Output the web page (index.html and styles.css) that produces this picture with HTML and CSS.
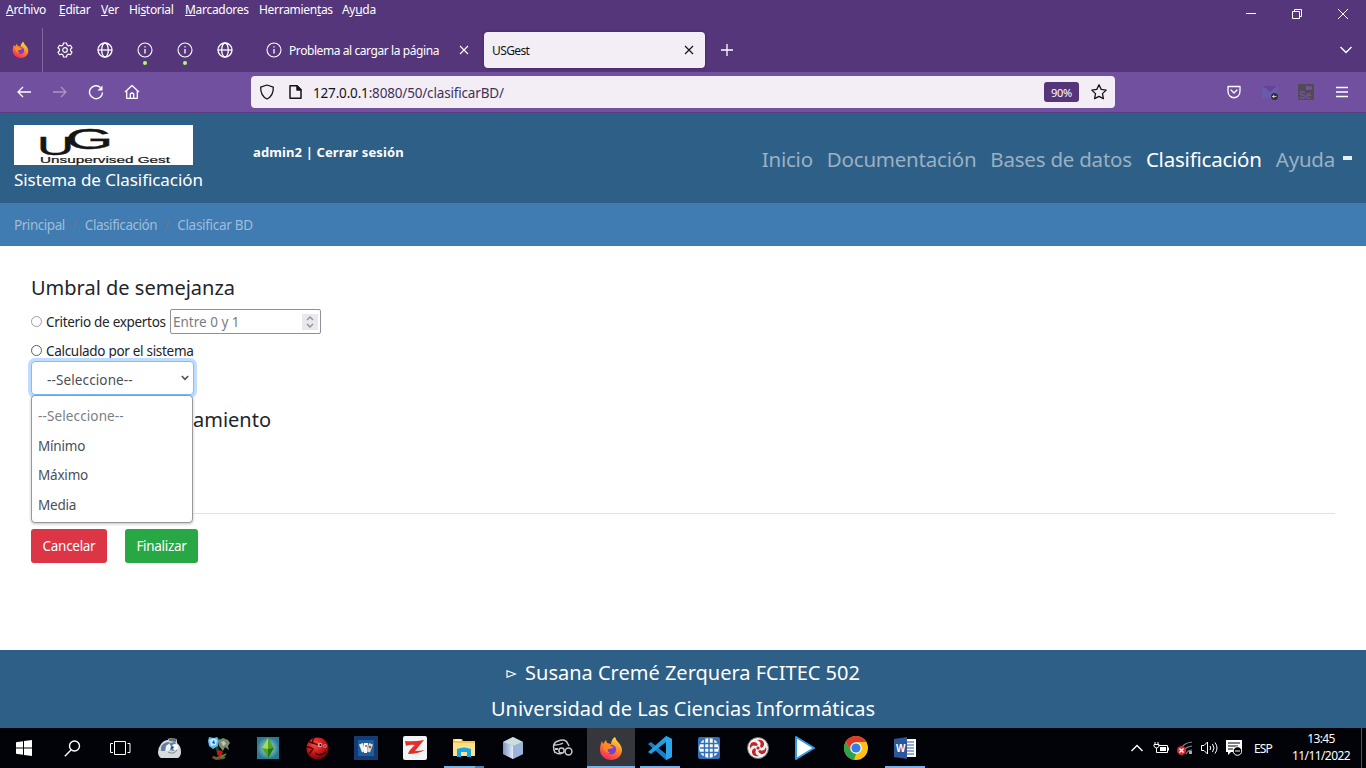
FILE: index.html
```html
<!DOCTYPE html>
<html lang="es">
<head>
<meta charset="utf-8">
<title>USGest</title>
<link rel="stylesheet" href="styles.css">
</head>
<body>
<svg class="defs" width="0" height="0" aria-hidden="true">
  <defs>
    <linearGradient id="flame" x1="0.8" y1="0" x2="0.3" y2="1"><stop offset="0" stop-color="#ffe83c"/><stop offset=".45" stop-color="#ff8c25"/><stop offset="1" stop-color="#f6235f"/></linearGradient>
    <linearGradient id="cube" x1="0" x2="1"><stop offset="0" stop-color="#7c95c2"/><stop offset="1" stop-color="#e3ebf7"/></linearGradient>
    <radialGradient id="bug" cx=".4" cy=".3" r=".75"><stop offset="0" stop-color="#ff4b3d"/><stop offset=".6" stop-color="#c1121a"/><stop offset="1" stop-color="#5d070b"/></radialGradient>
    <radialGradient id="teal"><stop offset="0" stop-color="#b8e6e4"/><stop offset="1" stop-color="#287b91"/></radialGradient>
    <symbol id="firefox" viewBox="0 0 24 24">
      <path d="M16 1c1 2 1 3 3 5 3 3 4 6 4 8 0 6-5 10-11 10S1 19.500 1 13.500C1 10 2 7 3 5l1 3 3-4 1 3 4 1c0-3 2-6 4-7z" fill="url(#flame)"/>
      <circle cx="12.300" cy="13.500" r="4.800" fill="#7440d8"/>
      <path d="M4 9c4-3 7-1 8 1 1 1 3 0 3 1-2 1-3 2-5 2-3 0-1 4 2 4-4 1-8-3-8-8z" fill="#ff8a23"/>
    </symbol>
    <symbol id="globe" viewBox="0 0 16 16"><g fill="none" stroke="currentColor" stroke-width="1.300"><circle cx="8" cy="8" r="7"/><ellipse cx="8" cy="8" rx="3.300" ry="7"/><path d="M1 8h14"/></g></symbol>
    <symbol id="info" viewBox="0 0 16 16"><circle cx="8" cy="8" r="7" fill="none" stroke="currentColor" stroke-width="1.100"/><path d="M8 7v4.500M8 4.300v1.300" stroke="currentColor" stroke-width="1.300"/></symbol>
    <symbol id="cross" viewBox="0 0 10 10"><path d="M1 1l8 8M9 1L1 9" stroke="currentColor" stroke-width="1.200"/></symbol>
  </defs>
</svg>

<div class="menubar">
  <span class="m1"><u>A</u>rchivo</span><span class="m2"><u>E</u>ditar</span><span class="m3"><u>V</u>er</span><span class="m4">Hi<u>s</u>torial</span><span class="m5"><u>M</u>arcadores</span><span class="m6">Herramien<u>t</u>as</span><span class="m7">Ay<u>u</u>da</span>
  <div class="winctl">
    <svg width="10" height="10"><path d="M0 4.500h10" stroke="#fff"/></svg>
    <svg width="10" height="10"><path d="M.5 2.500h7v7h-7zM2.500 2.500v-2h7v7h-2" fill="none" stroke="#fff"/></svg>
    <svg width="10" height="10"><path d="M0 0l10 10M10 0L0 10" stroke="#fff"/></svg>
  </div>
</div>

<div class="tabbar">
  <div class="fxview"><svg width="17" height="17"><use href="#firefox"/></svg></div>
  <div class="pin"><svg width="16" height="16" viewBox="0 0 16 16" fill="none" stroke="currentColor" stroke-width="1.200" stroke-linejoin="round"><path d="M6.500 1h3l.5 2 1.500.9 2-.6 1.500 2.500L13.500 7.200v1.600l1.500 1.400-1.500 2.500-2-.6-1.500.9-.5 2h-3L6 13l-1.500-.9-2 .6L1 10.200l1.500-1.400V7.200L1 5.800l1.500-2.500 2 .6L6 3z"/><circle cx="8" cy="8" r="2.300"/></svg></div>
  <div class="pin"><svg width="16" height="16"><use href="#globe"/></svg></div>
  <div class="pin"><svg width="16" height="16"><use href="#info"/></svg><i class="dot"></i></div>
  <div class="pin"><svg width="16" height="16"><use href="#info"/></svg><i class="dot"></i></div>
  <div class="pin"><svg width="16" height="16"><use href="#globe"/></svg></div>
  <div class="tab"><svg width="16" height="16"><use href="#info"/></svg><span class="tabname">Problema al cargar la página</span><svg class="x" width="10" height="10"><use href="#cross"/></svg></div>
  <div class="tab active"><span class="tabname">USGest</span><svg class="x" width="10" height="10"><use href="#cross"/></svg></div>
  <svg class="plus" width="12" height="12"><path d="M6 0v12M0 6h12" stroke="#fff" stroke-width="1.300"/></svg>
  <svg class="alltabs" width="12" height="8"><path d="M.5 1L6 6.500 11.500 1" fill="none" stroke="#fff" stroke-width="1.400"/></svg>
</div>

<div class="toolbar">
  <div class="navbtns">
    <svg width="16" height="16" fill="none" stroke="#fff" stroke-width="1.300"><path d="M15 8H2M7 3L2 8l5 5"/></svg>
    <svg class="dim" width="16" height="16" fill="none" stroke="#fff" stroke-width="1.300"><path d="M1 8h13M9 3l5 5-5 5"/></svg>
    <svg width="16" height="16" fill="none" stroke="#fff" stroke-width="1.400"><path d="M14.500 8.500A6.500 6.500 0 1 1 12.500 3.500"/><path d="M14.500 1.500v5h-5z" fill="#fff" stroke="none"/></svg>
    <svg width="16" height="16" fill="none" stroke="#fff" stroke-width="1.300" stroke-linejoin="round"><path d="M1 8L8 1.500 15 8M2.700 7v7.300h10.600V7M6.300 14V10q1.700-2 3.400 0v4"/></svg>
  </div>
  <div class="urlbar">
    <svg width="16" height="16" fill="none" stroke="#15141a" stroke-width="1.300" stroke-linejoin="round"><path d="M8 1l6.300 2.200C14.500 9 12 13 8 15 4 13 1.500 9 1.700 3.200z"/></svg>
    <svg width="13" height="14" fill="none" stroke="#15141a" stroke-width="1.500" stroke-linejoin="round"><path d="M1 .8h7l4 4v8.400H1z"/><path d="M8 1v4h4z" fill="#15141a"/></svg>
    <span class="url"><b>127.0.0.1</b>:8080/50/clasificarBD/</span>
    <span class="zoomlvl">90%</span>
    <svg width="16" height="16" fill="none" stroke="#15141a" stroke-width="1.300" stroke-linejoin="round"><path d="M8 .8l2.200 4.600 5 .7-3.700 3.500.9 5L8 12.300l-4.400 2.300.9-5L.8 6.100l5-.7z"/></svg>
  </div>
  <div class="exts">
    <svg width="14" height="14" fill="none" stroke="#fff" stroke-width="1.300" stroke-linejoin="round" stroke-linecap="round"><path d="M1 1.500h12V6c0 9-12 9-12 0zM4 5l3 3 3-3"/></svg>
    <svg width="16" height="16"><path d="M0 2h16v12H0z" fill="#695aae"/><path d="M1 2l7 6 7-6z" fill="#674397"/><circle cx="12.500" cy="12.500" r="3.500" fill="#30303b"/><path d="M10.500 12.500h4M10.500 12.500l1.500-1v2z" stroke="#ddd" fill="#ddd" stroke-width=".8"/></svg>
    <svg width="16" height="16"><rect width="16" height="16" rx="1" fill="#504c51"/><path d="M8 2h4v1l2-1v4l-2-1v1H8z" fill="#7550a2"/><text x="1" y="14.500" class="se">Se</text></svg>
    <svg width="12" height="12"><path d="M0 1.500h12M0 6h12M0 10.500h12" stroke="#fff" stroke-width="1.300"/></svg>
  </div>
</div>

<div class="page">
  <header class="head">
    <div class="brand">
      <svg class="logo" width="179" height="40">
        <rect width="179" height="40" fill="#fff"/>
        <text class="mono" transform="translate(23 29.500) scale(2.050 1)"><tspan class="mu">U</tspan><tspan class="mg" dx="-4.200" dy="-5.500">G</tspan></text>
        <text class="ug" x="26" y="38" textLength="130" lengthAdjust="spacingAndGlyphs">Unsupervised Gest</text>
      </svg>
      <div class="sys">Sistema de Clasificación</div>
    </div>
    <div class="user">admin2 | Cerrar sesión</div>
    <nav class="nav"><a>Inicio</a><a>Documentación</a><a>Bases de datos</a><a class="on">Clasificación</a><a>Ayuda</a><i class="caret"></i></nav>
  </header>
  <div class="crumbs"><span>Principal</span><i>/</i><span>Clasificación</span><i>/</i><span>Clasificar BD</span></div>
  <main class="main">
    <h4 class="h">Umbral de semejanza</h4>
    <div class="row r1"><i class="radio soft"></i><span class="t1">Criterio de expertos</span>
      <div class="num"><span>Entre 0 y 1</span><svg width="16" height="16"><rect width="16" height="16" fill="#e9e9ed"/><path d="M5 6l3-3 3 3M5 10l3 3 3-3" fill="none" stroke="#8f8f9d" stroke-width="1.400"/></svg></div></div>
    <div class="row r2"><i class="radio"></i><span class="t2">Calculado por el sistema</span></div>
    <div class="select"><span>--Seleccione--</span><svg width="8" height="6"><path d="M.8 1L4 4.300 7.200 1" fill="none" stroke="#495057" stroke-width="1.600"/></svg>
      <div class="options"><span class="off">--Seleccione--</span><span>Mínimo</span><span>Máximo</span><span>Media</span></div>
    </div>
    <h4 class="h h2">amiento</h4>
    <hr class="line">
    <div class="btns"><span class="btn red">Cancelar</span><span class="btn green">Finalizar</span></div>
  </main>
  <footer class="foot">
    <div class="f1"><svg width="11" height="8"><path d="M1 .8L9.500 4 1 7.200z" fill="none" stroke="#fff" stroke-width="1.200"/></svg><span>Susana Cremé Zerquera FCITEC 502</span></div>
    <div class="f2">Universidad de Las Ciencias Informáticas</div>
  </footer>
</div>

<div class="taskbar">
  <div class="sysbtns">
    <div><svg width="16" height="16"><path d="M0 2.200L7 1.200V7.500H0zM8 1l8-1v7.500H8zM0 8.500h7v6.300l-7-1zM8 8.500h8V16l-8-1z" fill="#fff"/></svg></div>
    <div><svg width="17" height="17" fill="none" stroke="#fff" stroke-width="1.400"><circle cx="10.500" cy="6" r="5"/><path d="M7 10L.8 16.200"/></svg></div>
    <div><svg width="21" height="14" fill="none" stroke="#fff"><path d="M4.500.5h11v13h-11zM3 2.500H.5v9H3M17.500 2.500H20v9h-2.500"/></svg></div>
  </div>
  <div class="apps">
    <div><svg width="24" height="22" viewBox="0 0 24 22"><path d="M3 7q3-4 7-4l1-2 8 1v4q4 3 4 9 0 4-3 6H3q-3-2-3-6 0-4 3-8z" fill="#d5dadd"/><path d="M3 14q-1-6 4-8 4-2 5 0l-4 3-1 5zM12 6l5-1 2 4-3 5-5-1z" fill="#5f7fa8"/><path d="M11 1l8 1-1 3-7-1z" fill="#6c7073"/><path d="M8 9l3-2 2 2-1 4-4 1z" fill="#eef5fb"/><circle cx="17" cy="10" r="3" fill="#f7fafc"/><circle cx="14.500" cy="10.500" r="1.200" fill="#213c61"/><path d="M10 15q6 3 9-2" fill="none" stroke="#7c8990"/></svg></div>
    <div><svg width="22" height="24" viewBox="0 0 22 24"><path d="M9 11q0 6 5 9M8 2l5 4" stroke="#174c22" stroke-width="3" fill="none"/><path d="M1 1l5 1 3-1 2 4-1 5-5 3-4-3-1-5z" fill="#5bb9ef"/><path d="M1 4l5-2 3 2-1 5-5 1z" fill="#b9e9ff"/><path d="M6 4l1 4-3-1z" fill="#1746ad"/><path d="M11 4l4-2 5 2 2 3-2 3 1 4-4-3-2 4-4-5z" fill="#7c8b72"/><path d="M13 6l3-1 2 3-3 2z" fill="#c3c8ad"/><path d="M9 15q4-2 6 1l-2 4-4-1z" fill="#cd131a"/><path d="M5 20l4 1 3-2 6 2-2 2-8 1-4-2z" fill="#76552b"/><path d="M13 21l5-3" stroke="#4f9437" stroke-width="2"/></svg></div>
    <div><svg width="22" height="22"><rect width="22" height="22" fill="url(#teal)"/><path d="M11 1l6 10-6 10-6-10z" fill="#53a621"/><path d="M11 1v11l-6-1z" fill="#a4db5a"/><path d="M11 12v9l6-10z" fill="#267719"/></svg></div>
    <div><svg width="23" height="23"><circle cx="11.500" cy="11.500" r="11" fill="url(#bug)"/><path d="M3 5q5 1 9 3M8 0l-2 6M1 10q4 0 6 2l-4 5M9 16q5 4 11-1" stroke="#35080a" stroke-width="1.300" fill="none"/><circle cx="14" cy="8" r="2.300" fill="#df9b91"/><circle cx="19" cy="9" r="1.800" fill="#df9b91"/><circle cx="14.500" cy="8" r="1"/><circle cx="19" cy="9" r=".8"/></svg></div>
    <div><svg width="24" height="24"><rect width="24" height="24" fill="#153b73"/><rect x="4" y="4" width="16" height="16" fill="#1c5f9f"/><path d="M5 8.500l4-1.500 2 8-3 1.500z" fill="#f6eee4"/><path d="M10 7h4l-1 10h-3z" fill="#fff"/><path d="M15 7l4 1.500-3 8-3-1z" fill="#e6d6c4"/><circle cx="12" cy="10" r="1" fill="#a05a3c"/><circle cx="16" cy="11" r="1.300" fill="#a05a3c"/></svg></div>
    <div><svg width="24" height="24"><rect width="24" height="24" rx="2" fill="#f1f4f5"/><path d="M2 5q9 1 19-1-5 6-9 11 5 0 10-1-7 4-17 4 1-4 7-9-5-1-9 1z" fill="#e52d2a"/></svg></div>
    <div class="running stacked"><svg width="22" height="20"><path d="M0 1h9l1 2h12v15H0z" fill="#f5c64c"/><path d="M0 5h22v13H0z" fill="#ffe18b"/><path d="M2 1h6v2H2z" fill="#fff3b5"/><path d="M4 19v-8q7-3 14 0v8h-4v-5H8v5z" fill="#18a7e4"/></svg></div>
    <div><svg width="22" height="24"><path d="M1 6L11 1l10 5v12l-10 5-10-5z" fill="#6d83b5"/><path d="M1 6l10 4v13L1 18z" fill="url(#cube)"/><path d="M21 6l-10 4v13l10-5z" fill="#9cb2d8"/><path d="M1 6l10-5 10 5-10 4z" fill="#c9dfdd"/></svg></div>
    <div><svg width="21" height="18" fill="none" stroke="#c8c8c8" stroke-width="1.500"><path d="M3 14Q-1 4 6 2q8-3 10 3l1 2M2 6q6 0 9-2M3 13q3 3 7 1"/><circle cx="9.500" cy="11.500" r="2.600"/><circle cx="16.500" cy="12.500" r="3.400"/><path d="M3 10h3" stroke-width="2"/></svg></div>
    <div class="current"><svg width="24" height="24"><use href="#firefox"/></svg></div>
    <div class="running"><svg width="24" height="24"><path d="M18 0l6 3v18l-6 3L0 8l3-2 15 12z" fill="#1681ca"/><path d="M18 0v6L3 18l-3-2z" fill="#259de0"/><path d="M18 0l6 3v18l-6 3z" fill="#2aa6ed"/></svg></div>
    <div><svg width="22" height="22"><rect width="22" height="22" rx="2" fill="#3470b6"/><circle cx="11" cy="11" r="10" fill="#f7f9fa"/><path d="M2 6.500h18M2 11h18M2 15.500h18M6.500 2v18M11 1v20M15.500 2v18" stroke="#3470b6" stroke-width="1.500"/></svg></div>
    <div><svg width="22" height="22"><circle cx="11" cy="11" r="10.500" fill="#f4f1f1" stroke="#777"/><g fill="#bd272c"><path d="M11 8Q9 3 4 6q-2 3-1 6 2-5 6-3z"/><path d="M11 8Q9 3 4 6q-2 3-1 6 2-5 6-3z" transform="rotate(90 11 11)"/><path d="M11 8Q9 3 4 6q-2 3-1 6 2-5 6-3z" transform="rotate(180 11 11)"/><path d="M11 8Q9 3 4 6q-2 3-1 6 2-5 6-3z" transform="rotate(270 11 11)"/><circle cx="11" cy="11" r="1.600"/></g></svg></div>
    <div class="play"><svg width="20" height="24"><path d="M1 1v22l18-11z" fill="#fff" stroke="#319bea" stroke-width="2" stroke-linejoin="round"/></svg></div>
    <div><svg width="24" height="24"><circle cx="12" cy="12" r="12" fill="#fbc116"/><path d="M1.600 6A12 12 0 0 1 22.400 6H12L7 15z" fill="#df3b2c"/><path d="M1.600 6L7 15l5 3-2 5.800A12 12 0 0 1 1.600 6z" fill="#2da14d"/><circle cx="12" cy="12" r="5.800" fill="#fff"/><circle cx="12" cy="12" r="4.600" fill="#347de5"/></svg></div>
    <div class="running"><svg width="23" height="22"><path d="M12 2h10v18H12z" fill="#fff"/><path d="M13 5h7M13 8h7M13 11h7M13 14h7M13 17h7" stroke="#2c579a"/><path d="M0 2l13-2v22L0 20z" fill="#2c579a"/><text x="2" y="15" class="word">W</text></svg></div>
  </div>
  <div class="tray">
    <svg width="12" height="8"><path d="M.5 7L6 1.500 11.500 7" fill="none" stroke="#fff" stroke-width="1.400"/></svg>
    <svg width="16" height="12" fill="none" stroke="#fff"><path d="M5.500 3.500h9v7h-9M2 0v2M5 0v2M1 2.500h5v2L4 6H3L1 4.500zM3.500 6v4.500H6"/><path d="M7 5h6v4H7z" fill="#fff" stroke="none"/><path d="M15.500 5.500v3"/></svg>
    <svg width="16" height="14" fill="none"><path d="M3 9Q6 2 15 1M6 11q2-5 9-6M9 13q2-4 6-4" stroke="#858585" stroke-width="1.200"/><path d="M12 10h3v3h-3z" fill="#aaa"/><circle cx="4.500" cy="9.500" r="4.500" fill="#db2934"/><path d="M2.500 7.500l4 4M6.500 7.500l-4 4" stroke="#fff" stroke-width="1.400"/></svg>
    <svg width="17" height="14" fill="none" stroke="#fff"><path d="M.5 4.500H3L6.500 1v12L3 9.500H.5zM9 5q1.500 2 0 4M11.500 3q3 4 0 8M14 1.500q4 5.500 0 11"/></svg>
    <svg width="16" height="16"><path d="M0 0h16v12H5l-3 3v-3H0z" fill="#fff"/><path d="M2 3h12M2 6h10M2 9h5" stroke="#000"/><circle cx="11.500" cy="11" r="4.300" fill="#000" stroke="#fff"/><path d="M9 11h5" stroke="#fff"/></svg>
    <span class="lang">ESP</span>
    <div class="clock"><span>13:45</span><span>11/11/2022</span></div>
  </div>
</div>
</body>
</html>
```
FILE: styles.css
```css
* { box-sizing: border-box; }
body { margin: 0; width: 1366px; height: 768px; overflow: hidden; display: flex; flex-direction: column; font-family: "Noto Sans", "Open Sans", sans-serif; color: #212529; background: #fff; }
svg { display: block; flex: none; }
i { font-style: normal; }
.defs { position: absolute; }
span, a { white-space: nowrap; }

.menubar { height: 28px; background: #55367a; color: #fff; display: flex; font-size: 12px; line-height: 20px; padding-left: 6px; letter-spacing: -0.3px; }
.menubar u { text-underline-offset: 1px; }
.m1 { width: 53px; } .m2 { width: 42px; } .m3 { width: 28px; } .m4 { width: 56px; } .m5 { width: 74px; } .m6 { width: 83px; } .m7 { width: 40px; }
.winctl { margin-left: auto; padding: 9px 18px 0 0; display: flex; gap: 36px; }

.tabbar { height: 44px; background: #55367a; color: #fff; display: flex; align-items: center; font-size: 12px; }
.fxview { width: 43px; height: 44px; border-right: 1px solid #80689a; display: flex; align-items: center; padding: 0 0 2px 12px; margin-right: 2px; }
.pin { width: 40px; height: 44px; display: flex; align-items: center; justify-content: center; position: relative; }
.dot { position: absolute; left: 18px; top: 33px; width: 4px; height: 4px; border-radius: 50%; background: #adff6b; }
.tab { display: flex; align-items: center; height: 36px; width: 229px; padding: 0 0 0 21px; letter-spacing: -0.42px; }
.tab .tabname { padding: 1px 0 0 7px; }
.tab .x { margin-left: auto; margin-right: 5px; }
.tab.active { width: 221px; margin-left: 10px; background: #f3eef5; color: #15141a; border-radius: 4px; padding: 0 6px 0 1px; box-shadow: 0 0 3px #3b2358; letter-spacing: -0.6px; }
.plus { margin-left: 16px; }
.alltabs { margin-left: auto; margin-right: 14px; }

.toolbar { height: 41px; background: #7250a0; border-bottom: 1px solid #5b3b83; display: flex; align-items: center; }
.navbtns { display: flex; gap: 20px; padding-left: 16px; width: 251px; }
.dim { opacity: .4; }
.urlbar { width: 864px; height: 32px; background: #f3eef5; border-radius: 4px; display: flex; align-items: center; padding: 0 8px; }
.url { font-size: 13.500px; letter-spacing: -0.17px; color: #423158; margin: 2px 0 0 11px; }
.url b { font-weight: 400; color: #15141a; }
.urlbar svg + svg { margin-left: 14px; }
.zoomlvl { margin-left: auto; margin-right: 12px; width: 35px; height: 20px; line-height: 21px; background: #55367a; border-radius: 3px; color: #fff; font-size: 11px; text-align: center; letter-spacing: -0.3px; }
.exts { display: flex; align-items: center; gap: 21px; margin-left: auto; padding-right: 18px; }
.exts svg:nth-child(3) { margin-left: -1px; margin-right: 1px; }
.se { font: bold 10px "Liberation Sans", sans-serif; fill: #7550a2; }

.page { height: 615px; display: flex; flex-direction: column; }
.head { height: 90px; background: #2e5f86; color: #fff; display: flex; }
.brand { width: 253px; padding: 12px 0 0 14px; }
.logo { overflow: visible; }
.mono { font-family: "Liberation Sans", sans-serif; fill: #151515; stroke: #151515; stroke-width: .4px; }
.mu { font-size: 25px; }
.mg { font-size: 30px; }
.ug { font: 9px "Liberation Sans", sans-serif; fill: #151515; stroke: #151515; stroke-width: .2px; }
.sys { font-size: 17px; line-height: 26px; margin-top: 2px; letter-spacing: -0.06px; white-space: nowrap; }
.user { padding-top: 29px; font-size: 13px; font-weight: 700; line-height: 20px; letter-spacing: 0.12px; white-space: nowrap; }
.nav { margin-left: auto; padding: 31px 14px 0 0; display: flex; gap: 14px; font-size: 20.500px; line-height: 30px; color: #9bb1c3; letter-spacing: -0.22px; }
.nav .on { color: #fff; }
.caret { width: 9px; height: 4px; background: #eceff0; margin: 12px 0 0 -6px; }
.crumbs { height: 43px; flex: none; background: #407bb1; color: #9fbdd8; display: flex; font-size: 13.500px; line-height: 45px; padding-left: 14px; letter-spacing: -0.45px; }
.crumbs i { width: 20px; color: #67798b; padding-left: 7px; }
.crumbs span:last-child { letter-spacing: -0.3px; }

.main { height: 404px; flex: none; padding: 27px 31px 0; font-size: 13.500px; letter-spacing: -0.3px; }
.h { margin: 0; font-size: 20px; line-height: 30px; font-weight: 400; letter-spacing: 0; }
.row { display: flex; align-items: center; }
.row > span { padding-top: 1px; }
.r1 { height: 27px; margin-top: 5px; }
.r2 { height: 21px; margin-top: 5px; }
.radio { width: 11px; height: 11px; border: 1px solid #5b5b66; border-radius: 50%; margin-right: 4px; flex: none; }
.radio.soft { border-color: #9b9ba6; }
.t1 { width: 124px; }
.num { width: 151px; height: 25px; border: 1px solid #8f8f9d; border-radius: 2px; display: flex; align-items: center; justify-content: space-between; padding: 0 2px; color: #777d82; letter-spacing: 0; }
.select { position: relative; width: 163px; height: 34px; border: 1px solid #80bdff; border-radius: 4px; box-shadow: 0 0 0 3px #bfdeff; display: flex; align-items: center; justify-content: space-between; padding: 0 4px 0 15px; color: #495057; background: #fff; letter-spacing: 0.12px; }
.select > span { padding-top: 3px; }
.options { position: absolute; z-index: 2; left: -1px; top: 33px; width: 162px; height: 128px; background: #fff; border: 1px solid #999; border-radius: 4px; box-shadow: 0 1px 3px rgba(0,0,0,.25); padding: 6px 6px 0; display: flex; flex-direction: column; line-height: 29.700px; letter-spacing: -0.2px; }
.options .off { color: #7a7f84; letter-spacing: 0.12px; }
.h2 { margin: 10px 0 0 162px; }
.line { margin: 78px 0 15px; border: 0; border-top: 1px solid #e2e3e3; }
.btns { display: flex; gap: 18px; }
.btn { height: 34px; line-height: 34px; text-align: center; color: #fff; border-radius: 3px; }
.red { width: 76px; background: #dc3545; }
.green { width: 73px; background: #28a745; }

.foot { height: 78px; flex: none; background: #2e5f86; color: #fff; text-align: center; font-size: 20px; line-height: 36px; padding-top: 5px; }
.f1 { display: flex; align-items: center; justify-content: center; gap: 8px; }
.f1 svg { margin-top: 2px; }

.taskbar { height: 40px; background: #020308; color: #fff; display: flex; }
.sysbtns { display: flex; width: 146px; }
.sysbtns > div { width: 48px; height: 40px; display: flex; align-items: center; justify-content: center; }
.apps { display: flex; gap: 1px; }
.apps > div { width: 48px; height: 40px; display: flex; align-items: center; justify-content: center; position: relative; }
.apps .running { background: linear-gradient(#74b2e8, #74b2e8) center bottom / 40px 2px no-repeat; }
.apps .stacked { background: linear-gradient(90deg, #74b2e8 31px, #527da6 31px) center bottom / 40px 2px no-repeat; }
.apps .current { background: #35373c; border-bottom: 2px solid #74b2e8; padding-top: 2px; }
.apps .play { padding-right: 4px; }
.word { font: bold 10px "Liberation Sans", sans-serif; fill: #fff; }
.tray { margin-left: auto; display: flex; align-items: center; border-right: 1px solid #555; margin-right: 4px; font-size: 12px; }
.tray svg { margin-right: 8px; }
.tray svg:first-child { margin-right: 10px; }
.lang { letter-spacing: -0.8px; margin-left: 4px; }
.clock { width: 80px; margin: -2px 0 0 9px; display: flex; flex-direction: column; text-align: center; line-height: 17px; letter-spacing: -0.6px; }
```
